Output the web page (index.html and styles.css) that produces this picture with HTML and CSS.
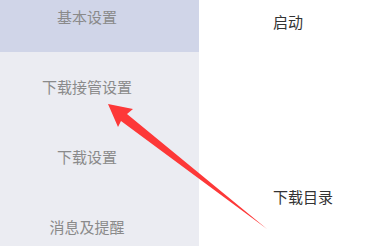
FILE: index.html
```html
<!DOCTYPE html>
<html lang="zh-CN">
<head>
<meta charset="utf-8">
<link rel="stylesheet" href="styles.css">
</head>
<body>
<div class="page">
  <nav class="sidebar">
    <div class="nav-item active">基本设置</div>
    <div class="nav-item">下载接管设置</div>
    <div class="nav-item">下载设置</div>
    <div class="nav-item">消息及提醒</div>
  </nav>
  <main class="content">
    <div class="row">启动</div>
    <div class="row row-dir">下载目录</div>
  </main>
  <svg class="arrow" width="373" height="246" viewBox="0 0 373 246">
    <polygon points="108,104 133,109 127,114 267,229 121,121 118,127" fill="#fd3838"/>
  </svg>
</div>
</body>
</html>
```
FILE: styles.css
```css
html, body {
  margin: 0;
  padding: 0;
  background: #ffffff;
  font-family: "Noto Sans CJK SC", "Noto Sans", sans-serif;
  overflow: hidden;
}
.page {
  position: relative;
  display: flex;
  width: 373px;
  height: 246px;
  overflow: hidden;
}
.sidebar {
  width: 199px;
  flex: 0 0 199px;
  background: #ebecf2;
  box-sizing: border-box;
  padding-right: 25px;
  display: flex;
  flex-direction: column;
  margin-top: -18px;
  height: 282px;
}
.nav-item {
  height: 70px;
  display: flex;
  align-items: center;
  justify-content: center;
  font-size: 15px;
  line-height: 20px;
  color: #8a8a8a;
  margin-right: -25px;
  padding-right: 25px;
}
.nav-item.active {
  background: #d0d5e8;
}
.content {
  flex: 1;
  padding-left: 74px;
  padding-top: 12px;
  display: flex;
  flex-direction: column;
}
.row {
  font-size: 15px;
  line-height: 20px;
  color: #333333;
}
.row-dir {
  margin-top: 155px;
}
.arrow {
  position: absolute;
  left: 0;
  top: 0;
  pointer-events: none;
}
```
